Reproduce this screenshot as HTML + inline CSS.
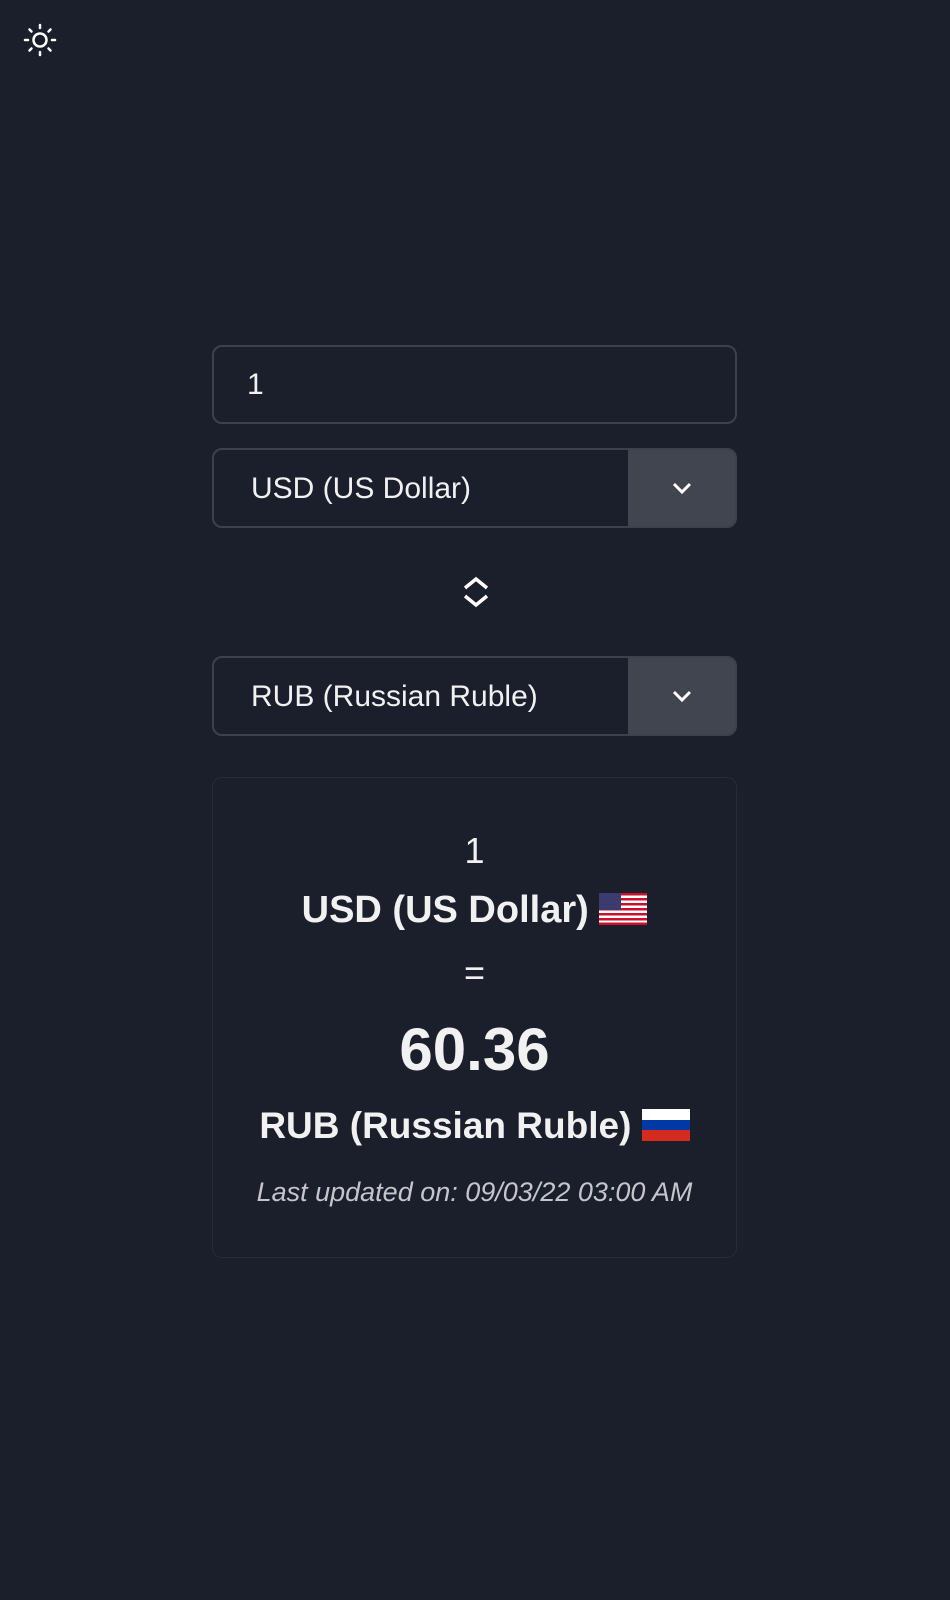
<!DOCTYPE html>
<html><head><meta charset="utf-8"><style>
html,body{margin:0;padding:0;background:#1b1f2b;width:950px;height:1600px;overflow:hidden;font-family:"Liberation Sans",sans-serif;color:#f1f1f1}
.box{position:absolute;left:212px;width:525px;box-sizing:border-box;border:2px solid #3d414b;border-radius:10px}
.inp{top:345px;height:79px;font-size:30px;line-height:75px;padding-left:33px}
.sel{height:80px;overflow:hidden;font-size:30px;line-height:78px;padding-left:37px}
.sel .btn{position:absolute;right:0;top:0;width:107px;height:100%;background:#414550;display:flex;align-items:center;justify-content:center}
.card{top:777px;height:481px;border:1.5px solid #272b36;text-align:center}
.t{position:absolute;left:0;right:0;text-align:center;font-weight:bold}
</style></head><body>
<svg style="position:absolute;left:22px;top:22px" width="36" height="36" viewBox="0 0 36 36" stroke="#fff" stroke-width="2.5" fill="none" stroke-linecap="round">
<circle cx="18" cy="18" r="6.5"/>
<path d="M18 3v3M18 30v3M3 18h3M30 18h3M7.5 7.5l2 2M26.5 26.5l2 2M7.5 28.5l2-2M26.5 9.5l2-2"/></svg>
<div class="box inp">1</div>
<div class="box sel" style="top:448px">USD (US Dollar)<div class="btn"><svg width="22" height="14" viewBox="0 0 22 14"><path d="M3 3l8 8 8-8" stroke="#fff" stroke-width="3" fill="none"/></svg></div></div>
<svg style="position:absolute;left:461px;top:575px" width="30" height="34" viewBox="0 0 30 34"><path d="M4 13l11-9 11 9M4 21l11 9 11-9" stroke="#fff" stroke-width="3.5" fill="none"/></svg>
<div class="box sel" style="top:656px">RUB (Russian Ruble)<div class="btn"><svg width="22" height="14" viewBox="0 0 22 14"><path d="M3 3l8 8 8-8" stroke="#fff" stroke-width="3" fill="none"/></svg></div></div>
<div class="box card">
<div class="t" style="top:52px;font-size:36px;font-weight:normal">1</div>
<div class="t" style="top:111px;font-size:38px">USD (US Dollar) <svg width="48" height="32" viewBox="0 0 48 32" style="vertical-align:-3px"><rect width="48" height="32" fill="#fff"/><g fill="#c8102e"><rect y="0" width="48" height="2.5"/><rect y="5" width="48" height="2.5"/><rect y="10" width="48" height="2.5"/><rect y="15" width="48" height="2.5"/><rect y="20" width="48" height="2.5"/><rect y="25" width="48" height="2.5"/><rect y="29.5" width="48" height="2.5"/></g><rect width="22" height="17" fill="#3c3b6e"/></svg></div>
<div class="t" style="top:174px;font-size:36px;font-weight:normal">=</div>
<div class="t" style="top:237px;font-size:60px">60.36</div>
<div class="t" style="top:327px;font-size:37px">RUB (Russian Ruble) <svg width="48" height="32" viewBox="0 0 48 32" style="vertical-align:-3px"><rect width="48" height="11" fill="#fff"/><rect y="11" width="48" height="10" fill="#0039a6"/><rect y="21" width="48" height="11" fill="#d52b1e"/></svg></div>
<div class="t" style="top:399px;font-size:27px;font-weight:normal;font-style:italic;color:#c4c6cc">Last updated on: 09/03/22 03:00 AM</div>
</div>
</body></html>
